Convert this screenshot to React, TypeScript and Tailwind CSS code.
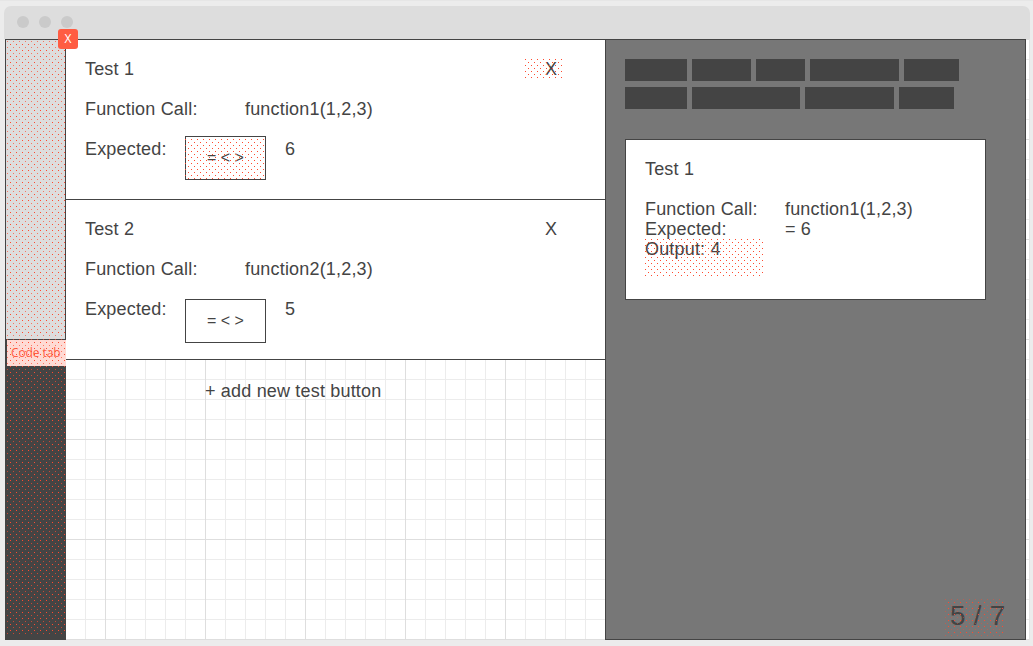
import React from "react";

function Dots({ id, className, soft = 0.7 }: { id: string; className: string; soft?: number }) {
  return (
    <svg className={`pointer-events-none absolute ${className}`} shapeRendering="crispEdges" aria-hidden="true">
      <defs>
        <pattern id={id} width="6" height="6" patternUnits="userSpaceOnUse">
          <rect width="1" height="1" fill="#ff4a2f" fillOpacity={soft} />
          <rect x="3" y="3" width="1" height="1" fill="#ff4a2f" />
        </pattern>
      </defs>
      <rect width="100%" height="100%" fill={`url(#${id})`} />
    </svg>
  );
}

function Grid() {
  const vertical = Array.from({ length: 52 }, (_, i) => i * 20);
  const horizontal = Array.from({ length: 31 }, (_, i) => i * 20);
  return (
    <svg className="absolute inset-0 h-[601px] w-[1025px]" shapeRendering="crispEdges" aria-hidden="true">
      {[false, true].map((major) => (
        <g key={String(major)} fill={major ? "#dedede" : "#ececec"}>
          {vertical.filter((x) => (x % 100 === 0) === major).map((x) => (
            <rect key={`v${x}`} x={x} y="0" width="1" height="601" />
          ))}
          {horizontal.filter((y) => (y % 100 === 0) === major).map((y) => (
            <rect key={`h${y}`} x="0" y={y} width="1025" height="1" />
          ))}
        </g>
      ))}
      <rect x="1024" y="0" width="1" height="601" fill="#e4e4e4" />
    </svg>
  );
}

type TestProps = { n: number; call: string; expected: string; marked?: boolean };

function TestCard({ n, call, expected, marked = false }: TestProps) {
  return (
    <section className={`h-[161px] w-[541px] border border-[#444] bg-white pl-[19px] ${marked ? "" : "-mt-px"}`}>
      <div className="flex h-10 pt-[19px] leading-5">
        <h2 className="w-[460px]">Test {n}</h2>
        <button className="relative h-5 leading-5">
          X
          {marked && <Dots id="dots-close" className="-left-5 top-0 h-[19px] w-[37px]" soft={1} />}
        </button>
      </div>
      <div className="flex h-10 pt-[19px] leading-5">
        <span className="w-40">Function Call:</span>
        <span>{call}</span>
      </div>
      <div className="flex">
        <span className="w-[100px] pt-[19px] leading-5">Expected:</span>
        <div className={`relative flex h-11 w-[81px] items-center justify-center border border-[#444] text-base tracking-normal ${marked ? "mt-4" : "mt-[19px]"}`}>
          = &lt; &gt;
          {marked && <Dots id="dots-operator" className="-left-px top-[2px] h-[40px] w-[79px]" soft={1} />}
        </div>
        <span className="ml-[19px] pt-[19px] leading-5">{expected}</span>
      </div>
    </section>
  );
}

function Sidebar() {
  return (
    <aside className="relative z-10 h-[601px] w-[61px]">
      <div className="relative h-[301px] border border-[#444] bg-[#ddd]">
        <Dots id="dots-sidebar" className="left-px top-px h-[297px] w-[59px]" />
        <span className="absolute -top-[11px] left-[52px] flex h-5 w-5 items-center justify-center rounded-[3px] bg-[#ff5c42] text-xs text-white [font-family:'Open_Sans',sans-serif]">
          X
        </span>
      </div>
      <div className="relative h-[300px] bg-[#444]">
        <div className="ml-[2px] h-[26px] w-[59px] whitespace-nowrap bg-[#ffdad4] pl-1 text-xs leading-[26px] tracking-[-0.1px] text-[#ff5c42] [font-family:'Open_Sans',sans-serif]">
          Code tab
        </div>
        <Dots id="dots-code" className="-top-px left-[2px] h-[296px] w-[59px]" />
      </div>
    </aside>
  );
}

function ResultPanel() {
  return (
    <aside className="-ml-px flex h-[601px] w-[421px] flex-col border border-[#444] bg-[#777] pl-[19px] pt-[19px]">
      <div className="flex h-[22px] gap-[5px]">
        <i className="w-[62px] bg-[#444]" />
        <i className="w-[59px] bg-[#444]" />
        <i className="w-[49px] bg-[#444]" />
        <i className="w-[89px] bg-[#444]" />
        <i className="w-[55px] bg-[#444]" />
      </div>
      <div className="mt-[6px] flex h-[22px] gap-[5px]">
        <i className="w-[62px] bg-[#444]" />
        <i className="w-[108px] bg-[#444]" />
        <i className="w-[89px] bg-[#444]" />
        <i className="w-[55px] bg-[#444]" />
      </div>
      <section className="mt-[30px] h-[161px] w-[361px] border border-[#444] bg-white pl-[19px] pt-[19px] leading-5">
        <h2>Test 1</h2>
        <div className="mt-5 flex">
          <span className="w-[140px]">Function Call:</span>
          <span>function1(1,2,3)</span>
        </div>
        <div className="flex">
          <span className="w-[140px]">Expected:</span>
          <span>= 6</span>
        </div>
        <div className="relative">
          Output: 4
          <Dots id="dots-output" className="left-0 top-0 h-[37px] w-[118px]" soft={1} />
        </div>
      </section>
      <div className="relative mb-[5px] mr-[19px] mt-auto w-[56px] self-end whitespace-nowrap text-[28px] leading-9">
        5 / 7
        <Dots id="dots-count" className="-left-[5px] top-px h-[37px] w-[60px]" soft={0.45} />
      </div>
    </aside>
  );
}

export default function App() {
  return (
    <main className="h-[646px] w-[1033px] overflow-hidden border-t border-[#e6e6e6] bg-[#ececec] pl-1 pt-[5px] text-[18px] tracking-[0.18px] text-[#444] [font-family:'Liberation_Sans',sans-serif]">
      <header className="flex h-[33px] w-[1026px] gap-[10px] rounded-t-[7px] bg-[#ddd] pl-[13px] pt-[10px]">
        <i className="h-3 w-3 rounded-full bg-[#cacaca]" />
        <i className="h-3 w-3 rounded-full bg-[#cacaca]" />
        <i className="h-3 w-3 rounded-full bg-[#cacaca]" />
      </header>
      <div className="relative ml-px h-[601px] w-[1025px] bg-white">
        <Grid />
        <div className="relative flex">
          <Sidebar />
          <div className="-ml-px w-[541px]">
            <TestCard n={1} call="function1(1,2,3)" expected="6" marked />
            <TestCard n={2} call="function2(1,2,3)" expected="5" />
            <button className="ml-[140px] mt-[21px] block h-5 leading-5">+ add new test button</button>
          </div>
          <ResultPanel />
        </div>
      </div>
    </main>
  );
}
